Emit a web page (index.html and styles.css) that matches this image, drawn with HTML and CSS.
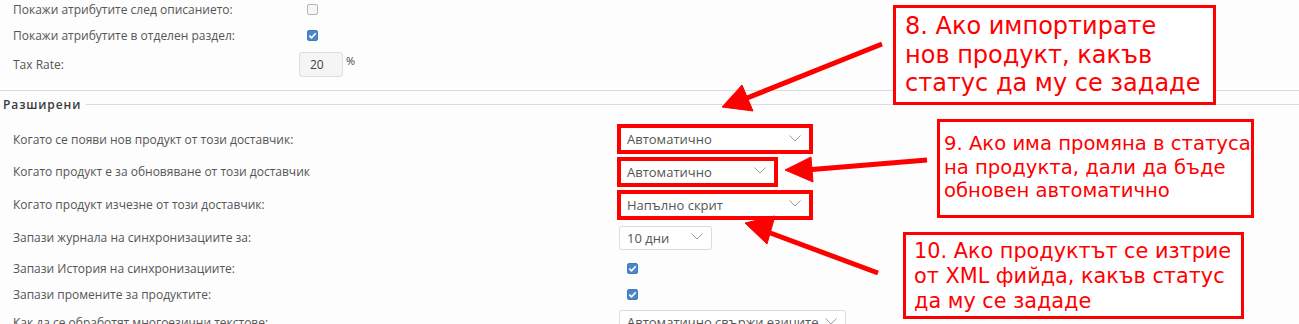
FILE: index.html
```html
<!DOCTYPE html>
<html lang="bg">
<head>
<meta charset="utf-8">
<title>Настройки</title>
<link rel="stylesheet" href="styles.css">
</head>
<body>
<div class="page">
  <div class="form top">
    <div class="row r1">
      <div class="label">Покажи атрибутите след описанието:</div>
      <div class="ctrl"><span class="cb"></span></div>
    </div>
    <div class="row r2">
      <div class="label">Покажи атрибутите в отделен раздел:</div>
      <div class="ctrl"><span class="cb on"><svg viewBox="0 0 11 11" width="11" height="11"><path d="M2.3 5.6 L4.5 7.8 L8.8 3.2" fill="none" stroke="#fff" stroke-width="1.6"/></svg></span></div>
    </div>
    <div class="row r3">
      <div class="label">Tax Rate:</div>
      <div class="ctrl tax"><span class="input">20</span><span class="pct">%</span></div>
    </div>
  </div>

  <div class="legend"><span>Разширени</span><i></i></div>

  <div class="form adv">
    <div class="row">
      <div class="label">Когато се появи нов продукт от този доставчик:</div>
      <div class="ctrl"><div class="hl w1"><div class="sel">Автоматично<svg class="chev" viewBox="0 0 12 7" width="12" height="7"><path d="M0.5 0.5 L6 6 L11.5 0.5" fill="none" stroke="#9a9a9a" stroke-width="1"/></svg></div></div></div>
    </div>
    <div class="row">
      <div class="label">Когато продукт е за обновяване от този доставчик</div>
      <div class="ctrl"><div class="hl w2"><div class="sel">Автоматично<svg class="chev" viewBox="0 0 12 7" width="12" height="7"><path d="M0.5 0.5 L6 6 L11.5 0.5" fill="none" stroke="#9a9a9a" stroke-width="1"/></svg></div></div></div>
    </div>
    <div class="row">
      <div class="label">Когато продукт изчезне от този доставчик:</div>
      <div class="ctrl"><div class="hl w1"><div class="sel">Напълно скрит<svg class="chev" viewBox="0 0 12 7" width="12" height="7"><path d="M0.5 0.5 L6 6 L11.5 0.5" fill="none" stroke="#9a9a9a" stroke-width="1"/></svg></div></div></div>
    </div>
    <div class="row">
      <div class="label">Запази журнала на синхронизациите за:</div>
      <div class="ctrl"><div class="sel box s10">10 дни<svg class="chev" viewBox="0 0 12 7" width="12" height="7"><path d="M0.5 0.5 L6 6 L11.5 0.5" fill="none" stroke="#9a9a9a" stroke-width="1"/></svg></div></div>
    </div>
    <div class="row">
      <div class="label">Запази История на синхронизациите:</div>
      <div class="ctrl"><span class="cb on"><svg viewBox="0 0 11 11" width="11" height="11"><path d="M2.3 5.6 L4.5 7.8 L8.8 3.2" fill="none" stroke="#fff" stroke-width="1.6"/></svg></span></div>
    </div>
    <div class="row">
      <div class="label">Запази промените за продуктите:</div>
      <div class="ctrl"><span class="cb on"><svg viewBox="0 0 11 11" width="11" height="11"><path d="M2.3 5.6 L4.5 7.8 L8.8 3.2" fill="none" stroke="#fff" stroke-width="1.6"/></svg></span></div>
    </div>
    <div class="row">
      <div class="label">Как да се обработят многоезични текстове:</div>
      <div class="ctrl"><div class="sel box slang">Автоматично свържи езиците<svg class="chev" viewBox="0 0 12 7" width="12" height="7"><path d="M0.5 0.5 L6 6 L11.5 0.5" fill="none" stroke="#9a9a9a" stroke-width="1"/></svg></div></div>
    </div>
  </div>

  <svg class="arrows" width="1299" height="324" viewBox="0 0 1299 324">
    <g fill="#ff0000" stroke="#ff0000">
      <line x1="882" y1="44" x2="742" y2="100" stroke-width="5"/>
      <polygon points="722,107 742,85 753,111" stroke-width="1"/>
      <line x1="927" y1="160" x2="806" y2="170" stroke-width="5"/>
      <polygon points="785,170 811,157 813,182" stroke-width="1"/>
      <line x1="878" y1="273" x2="765" y2="231" stroke-width="5"/>
      <polygon points="745,223 775,216 767,244" stroke-width="1"/>
    </g>
  </svg>

  <div class="note n8">8. Ако импортирате<br>нов продукт, какъв<br>статус да му се зададе</div>
  <div class="note n9">9. Ако има промяна в статуса<br>на продукта, дали да бъде<br>обновен автоматично</div>
  <div class="note n10">10. Ако продуктът се изтрие<br>от XML фийда, какъв статус<br>да му се зададе</div>
</div>
</body>
</html>
```

FILE: styles.css
```css
html, body {
  margin: 0;
  padding: 0;
  background: #fdfdfd;
}
.page {
  position: relative;
  width: 1299px;
  height: 324px;
  overflow: hidden;
  font-family: "Open Sans", "Liberation Sans", sans-serif;
  font-size: 12px;
  color: #555;
}
.form {
  display: flex;
  flex-direction: column;
}
.row {
  display: flex;
  align-items: center;
}
.label {
  padding-left: 13px;
  box-sizing: border-box;
  flex: none;
}
.top .label { width: 299px; }
.adv .label { width: 617px; }
.top .r1 { height: 18px; }
.top .r2 { height: 34px; }
.top .r3 { height: 24px; }
.top .cb { margin-left: 8px; }
.top {
  padding-bottom: 14px;
  border-bottom: 1px solid #dcdcdc;
}
.cb {
  display: block;
  width: 11px;
  height: 11px;
  box-sizing: border-box;
  border: 1px solid #b5b5b5;
  border-radius: 2px;
  background: #f6f6f6;
}
.cb.on {
  border-color: #3f7bbf;
  background: #4a86c8;
}
.cb svg {
  display: block;
  margin: -1px;
}
.tax {
  display: flex;
  align-items: flex-start;
}
.input {
  display: block;
  width: 44px;
  height: 25px;
  box-sizing: border-box;
  border: 1px solid #dedede;
  border-radius: 3px;
  background: #f5f5f5;
  padding-left: 10px;
  line-height: 23px;
  font-size: 12px;
  color: #444;
}
.pct {
  margin-left: 3px;
  margin-top: 1px;
  font-size: 11px;
  color: #444;
}
.legend {
  display: flex;
  align-items: center;
  height: 14px;
  margin: 6px 0 12px;
  padding-left: 3px;
}
.legend span {
  font-weight: 600;
  letter-spacing: 0.9px;
  color: #3a3a3a;
  font-size: 12px;
}
.legend i {
  flex: 1;
  height: 1px;
  background: #dcdcdc;
  margin-left: 5px;
}
.adv .row:nth-child(1) { height: 32px; }
.adv .row:nth-child(2) { height: 33px; }
.adv .row:nth-child(3) { height: 33px; }
.adv .row:nth-child(4) { height: 33px; }
.adv .row:nth-child(5) { height: 28px; }
.adv .row:nth-child(6) { height: 24px; }
.adv .row:nth-child(7) { height: 32px; }
.adv .row:nth-child(5) .cb,
.adv .row:nth-child(6) .cb { margin-left: 10px; }
.hl {
  border: 4px solid #ff0000;
  box-sizing: border-box;
  height: 30px;
  background: #fff;
}
.hl.w1 { width: 196px; }
.hl.w2 { width: 161px; }
.sel {
  display: flex;
  align-items: center;
  justify-content: space-between;
  height: 100%;
  box-sizing: border-box;
  padding: 0 8px 0 6px;
  font-size: 13px;
  color: #555;
  background: #fff;
}
.sel .chev { flex: none; margin-top: -2px; }
.sel.box {
  height: 24px;
  border: 1px solid #dcdcdc;
  border-radius: 3px;
  margin-left: 2px;
  padding-left: 7px;
}
.s10 { width: 93px; }
.slang { width: 227px; }
.arrows {
  position: absolute;
  left: 0;
  top: 0;
}
.note {
  position: absolute;
  box-sizing: border-box;
  border: 3px solid #ff0000;
  background: #fff;
  color: #ff0000;
  font-family: "DejaVu Sans", sans-serif;
  white-space: nowrap;
}
.n8 {
  left: 893px;
  top: 5px;
  width: 323px;
  height: 100px;
  padding: 4px 0 0 9px;
  font-size: 24px;
  line-height: 28.5px;
}
.n9 {
  left: 937px;
  top: 119px;
  width: 317px;
  height: 99px;
  padding: 10px 0 0 4px;
  font-size: 19.6px;
  line-height: 23.5px;
}
.n10 {
  left: 903px;
  top: 232px;
  width: 341px;
  height: 87px;
  padding: 4px 0 0 8px;
  font-size: 20.8px;
  line-height: 25px;
}
```
